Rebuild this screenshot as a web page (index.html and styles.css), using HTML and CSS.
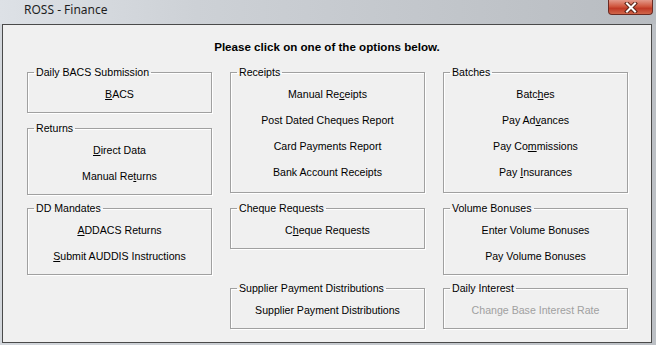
FILE: index.html
```html
<!DOCTYPE html>
<html lang="en">
<head>
    <meta charset="UTF-8">
    <meta name="viewport" content="width=device-width, initial-scale=1.0">
    <title>ROSS - Finance</title>
    <link rel="stylesheet" href="styles.css">
</head>
<body>

    <div class="window">
        <div class="titlebar">
            <span class="title">ROSS - Finance</span>
            <div class="close-btn">
                <svg width="14" height="11" viewBox="0 0 14 11">
                    <path d="M3 1.5 L11 9.5 M11 1.5 L3 9.5" stroke="#5a2418" stroke-width="4" stroke-linecap="square"/>
                    <path d="M3 1.5 L11 9.5 M11 1.5 L3 9.5" stroke="#fff" stroke-width="2" stroke-linecap="square"/>
                </svg>
            </div>
        </div>

        <div class="client">
            <h2 class="prompt">Please click on one of the options below.</h2>

            <div class="columns">
                <div class="col">
                    <fieldset class="group">
                        <legend>Daily BACS Submission</legend>
                        <a class="option"><u>B</u>ACS</a>
                    </fieldset>
                    <fieldset class="group gap-9">
                        <legend>Returns</legend>
                        <a class="option"><u>D</u>irect Data</a>
                        <a class="option">Manual Re<u>t</u>urns</a>
                    </fieldset>
                    <fieldset class="group gap-7">
                        <legend>DD Mandates</legend>
                        <a class="option"><u>A</u>DDACS Returns</a>
                        <a class="option"><u>S</u>ubmit AUDDIS Instructions</a>
                    </fieldset>
                </div>

                <div class="col">
                    <fieldset class="group tall">
                        <legend>Receipts</legend>
                        <a class="option">Manual Re<u>c</u>eipts</a>
                        <a class="option">Post Dated Cheques Report</a>
                        <a class="option">Card Payments Report</a>
                        <a class="option">Bank Account Receipts</a>
                    </fieldset>
                    <fieldset class="group gap-9">
                        <legend>Cheque Requests</legend>
                        <a class="option">C<u>h</u>eque Requests</a>
                    </fieldset>
                    <fieldset class="group gap-33">
                        <legend>Supplier Payment Distributions</legend>
                        <a class="option">Supplier Payment Distributions</a>
                    </fieldset>
                </div>

                <div class="col">
                    <fieldset class="group tall">
                        <legend>Batches</legend>
                        <a class="option">Batc<u>h</u>es</a>
                        <a class="option">Pay Ad<u>v</u>ances</a>
                        <a class="option">Pay Co<u>m</u>missions</a>
                        <a class="option">Pay <u>I</u>nsurances</a>
                    </fieldset>
                    <fieldset class="group gap-9">
                        <legend>Volume Bonuses</legend>
                        <a class="option">Enter Volume Bonuses</a>
                        <a class="option">Pay Volume Bonuses</a>
                    </fieldset>
                    <fieldset class="group gap-7">
                        <legend>Daily Interest</legend>
                        <a class="option disabled">Chan<u>g</u>e Base Interest Rate</a>
                    </fieldset>
                </div>
            </div>
        </div>
    </div>

</body>
</html>
```

FILE: styles.css
```css
body {
    margin: 0;
    padding: 0;
    font-family: "Liberation Sans", Arial, sans-serif;
    font-size: 10.6px;
    color: #000;
    background-color: #c3c7cb;
}

.window {
    width: 656px;
    height: 345px;
    background: linear-gradient(to right, #d3d7dc 0%, #c9cdd2 35%, #bcc0c5 100%);
    overflow: hidden;
}

.titlebar {
    display: flex;
    align-items: flex-start;
    height: 24px;
    background: linear-gradient(to right, #dde1e6 0%, #cdd1d6 30%, #b8bcc1 100%);
}

.title {
    padding-left: 24px;
    line-height: 19px;
    font-family: "Noto Sans", "Liberation Sans", sans-serif;
    font-size: 12px;
    color: #1e1e1e;
}

.close-btn {
    margin-left: auto;
    margin-right: 3px;
    width: 45px;
    height: 15px;
    display: flex;
    align-items: center;
    justify-content: center;
    box-sizing: border-box;
    border: 1px solid #6b2a22;
    border-top: none;
    border-radius: 0 0 4px 4px;
    background: linear-gradient(to bottom, #e3998a 0%, #d05840 45%, #c03a26 60%, #d0664a 100%);
}

.client {
    margin: 0 4px 0 2px;
    height: 319px;
    box-sizing: border-box;
    border: 1px solid #4a4a4a;
    background-color: #f0f0f0;
    padding: 15px 0 0 24px;
}

.prompt {
    margin: 0 0 13px;
    padding-right: 24px;
    font-size: 11.6px;
    line-height: 13px;
    font-weight: bold;
    text-align: center;
}

.columns {
    display: grid;
    grid-template-columns: 185px 195px 185px;
    column-gap: 18px;
    align-items: start;
}

.col {
    display: flex;
    flex-direction: column;
}

.group {
    margin: 0;
    padding: 2px 6px 5px;
    min-width: 0;
    border: 1px solid #a0a0a0;
    box-shadow: inset 1px 1px 0 #fff, 1px 1px 0 #fff;
}

.group.tall {
    padding-bottom: 7px;
}

.group legend {
    padding: 0 2px;
    line-height: 13px;
}

.gap-7 { margin-top: 7px; }
.gap-9 { margin-top: 9px; }
.gap-33 { margin-top: 33px; }

.option {
    display: block;
    line-height: 26px;
    text-align: center;
    cursor: pointer;
}

.option.disabled {
    color: #a0a0a0;
    cursor: default;
}
```
